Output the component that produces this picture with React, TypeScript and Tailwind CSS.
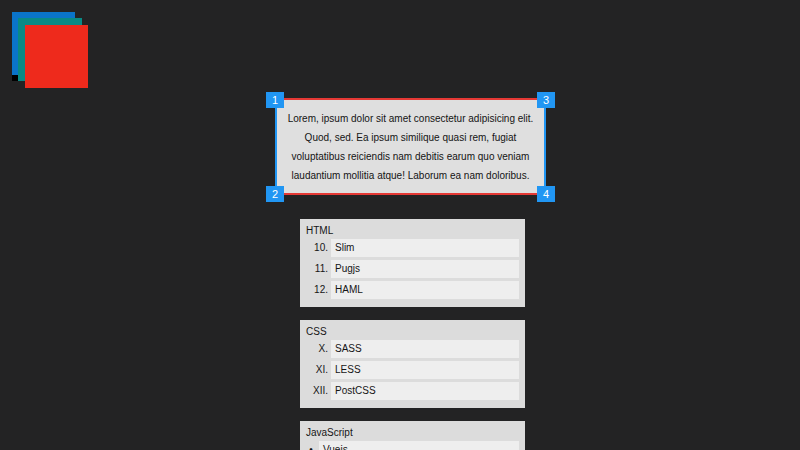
import React from 'react';

const LISTS = [
  { title: 'HTML', marker: 'w-[22px] text-right', items: [['10.', 'Slim'], ['11.', 'Pugjs'], ['12.', 'HAML']] },
  { title: 'CSS', marker: 'w-[22px] text-right', items: [['X.', 'SASS'], ['XI.', 'LESS'], ['XII.', 'PostCSS']] },
  { title: 'JavaScript', marker: 'w-[10px] text-center', items: [['•', 'Vuejs'], ['•', 'React'], ['•', 'Angular']] },
];

const LINES = [
  'Lorem, ipsum dolor sit amet consectetur adipisicing elit.',
  'Quod, sed. Ea ipsum similique quasi rem, fugiat',
  'voluptatibus reiciendis nam debitis earum quo veniam',
  'laudantium mollitia atque! Laborum ea nam doloribus.',
];

const Badge = ({ n, className }: { n: string; className: string }) => (
  <span className={`absolute flex h-4 w-[18px] items-center justify-center bg-[#2196f3] text-[11px] leading-none text-white ${className}`}>
    {n}
  </span>
);

export default function App() {
  return (
    <div className="relative h-[450px] overflow-hidden bg-[#232324] font-['Liberation_Sans',Arial,sans-serif]">
      {/* stacked squares */}
      <div className="absolute left-[12px] top-[18px] h-[63px] w-[63px] bg-black" />
      <div className="absolute left-[12px] top-[12px] h-[63px] w-[63px] bg-[#0a74c9]" />
      <div className="absolute left-[18px] top-[18px] h-[63px] w-[64px] bg-[#098a86]" />
      <div className="absolute left-[25px] top-[25px] h-[63px] w-[63px] bg-[#ee2a1c]" />

      <div className="flex flex-col items-center pl-[21px] pt-[98px]">
        <div className="relative w-[271px] whitespace-nowrap border-2 border-x-[#2196f3] border-y-[#e53935] bg-[#dfdfdf] pb-[8px] pt-[9px] text-center text-[10px] leading-[19px] text-[#141414]">
          {LINES.map((line) => (
            <div key={line}>{line}</div>
          ))}
          <Badge n="1" className="-left-[11px] -top-[8px]" />
          <Badge n="3" className="-right-[11px] -top-[8px]" />
          <Badge n="2" className="-bottom-[9px] -left-[11px]" />
          <Badge n="4" className="-bottom-[9px] -right-[11px]" />
        </div>

        <div className="ml-[4px] mt-[24px] flex flex-col gap-[13px]">
          {LISTS.map((list) => (
            <div key={list.title} className="w-[225px] bg-[#dcdcdc] px-[6px] pb-[8px] pt-[3px] text-[10px] text-[#151515]">
              <div className="h-[17px] leading-[17px]">{list.title}</div>
              <div className="flex flex-col gap-[3px]">
                {list.items.map(([n, label]) => (
                  <div key={label} className="flex h-[18px] leading-[18px]">
                    <span className={list.marker}>{n}</span>
                    <span className="ml-[3px] flex-1 bg-[#eeeeee] pl-[4px]">{label}</span>
                  </div>
                ))}
              </div>
            </div>
          ))}
        </div>
      </div>
    </div>
  );
}
